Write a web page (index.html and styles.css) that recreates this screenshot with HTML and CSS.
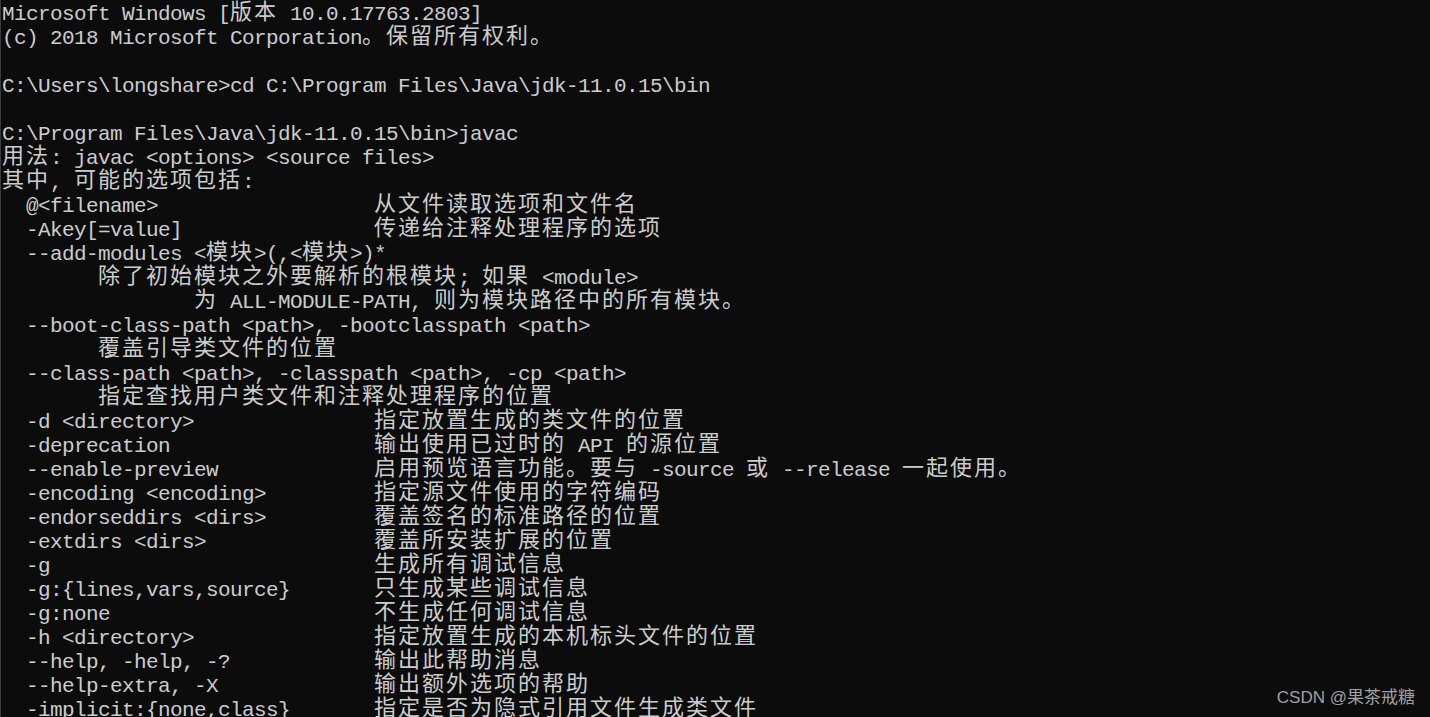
FILE: index.html
```html
<!DOCTYPE html>
<html lang="zh-CN">
<head>
<meta charset="utf-8">
<title>命令提示符</title>
<link rel="stylesheet" href="styles.css">
</head>
<body>
<main class="console">
  <div class="ln">Microsoft Windows [<span class="c">版本</span> 10.0.17763.2803]</div>
  <div class="ln">(c) 2018 Microsoft Corporation<span class="c">。保留所有权利。</span></div>
  <div class="ln"> </div>
  <div class="ln">C:\Users\longshare&gt;cd C:\Program Files\Java\jdk-11.0.15\bin</div>
  <div class="ln"> </div>
  <div class="ln">C:\Program Files\Java\jdk-11.0.15\bin&gt;javac</div>
  <div class="ln"><span class="c">用法</span>: javac &lt;options&gt; &lt;source files&gt;</div>
  <div class="ln"><span class="c">其中</span>, <span class="c">可能的选项包括</span>:</div>

  <div class="ln in2"><span class="k">@&lt;filename&gt;</span><span class="c">从文件读取选项和文件名</span></div>
  <div class="ln in2"><span class="k">-Akey[=value]</span><span class="c">传递给注释处理程序的选项</span></div>
  <div class="ln in2">--add-modules &lt;<span class="c">模块</span>&gt;(,&lt;<span class="c">模块</span>&gt;)*</div>
  <div class="ln in8"><span class="c">除了初始模块之外要解析的根模块</span>; <span class="c">如果</span> &lt;module&gt;</div>
  <div class="ln in16"><span class="c">为</span> ALL-MODULE-PATH, <span class="c">则为模块路径中的所有模块。</span></div>
  <div class="ln in2">--boot-class-path &lt;path&gt;, -bootclasspath &lt;path&gt;</div>
  <div class="ln in8"><span class="c">覆盖引导类文件的位置</span></div>
  <div class="ln in2">--class-path &lt;path&gt;, -classpath &lt;path&gt;, -cp &lt;path&gt;</div>
  <div class="ln in8"><span class="c">指定查找用户类文件和注释处理程序的位置</span></div>
  <div class="ln in2"><span class="k">-d &lt;directory&gt;</span><span class="c">指定放置生成的类文件的位置</span></div>
  <div class="ln in2"><span class="k">-deprecation</span><span class="c">输出使用已过时的</span> API <span class="c">的源位置</span></div>
  <div class="ln in2"><span class="k">--enable-preview</span><span class="c">启用预览语言功能。要与</span> -source <span class="c">或</span> --release <span class="c">一起使用。</span></div>
  <div class="ln in2"><span class="k">-encoding &lt;encoding&gt;</span><span class="c">指定源文件使用的字符编码</span></div>
  <div class="ln in2"><span class="k">-endorseddirs &lt;dirs&gt;</span><span class="c">覆盖签名的标准路径的位置</span></div>
  <div class="ln in2"><span class="k">-extdirs &lt;dirs&gt;</span><span class="c">覆盖所安装扩展的位置</span></div>
  <div class="ln in2"><span class="k">-g</span><span class="c">生成所有调试信息</span></div>
  <div class="ln in2"><span class="k">-g:{lines,vars,source}</span><span class="c">只生成某些调试信息</span></div>
  <div class="ln in2"><span class="k">-g:none</span><span class="c">不生成任何调试信息</span></div>
  <div class="ln in2"><span class="k">-h &lt;directory&gt;</span><span class="c">指定放置生成的本机标头文件的位置</span></div>
  <div class="ln in2"><span class="k">--help, -help, -?</span><span class="c">输出此帮助消息</span></div>
  <div class="ln in2"><span class="k">--help-extra, -X</span><span class="c">输出额外选项的帮助</span></div>
  <div class="ln in2"><span class="k">-implicit:{none,class}</span><span class="c">指定是否为隐式引用文件生成类文件</span></div>
</main>
<div class="mark">CSDN @果茶戒糖</div>
</body>
</html>
```

FILE: styles.css
```css
html, body {
  margin: 0;
  padding: 0;
  background: #0c0c0c;
  height: 100%;
  overflow: hidden;
}

.console {
  box-sizing: border-box;
  height: 717px;
  border-left: 1px solid #3c3c3c;
  padding: 3px 0 0 1px;
  color: #cccccc;
  font-family: "Liberation Mono", "Noto Sans CJK SC", monospace;
  font-size: 21px;
  letter-spacing: -0.6px;
  line-height: 24px;
  overflow: hidden;
}

.ln {
  height: 24px;
  white-space: pre;
}

.in2 { padding-left: 24px; }
.in8 { padding-left: 96px; }
.in16 { padding-left: 192px; }

.k {
  display: inline-block;
  width: 348px;
  vertical-align: top;
}

.c {
  font-family: "Noto Sans CJK SC", sans-serif;
  font-size: 22px;
  letter-spacing: 2px;
  line-height: 0;
  vertical-align: 1px;
}

.mark {
  position: absolute;
  right: 15px;
  bottom: 10px;
  color: #a0a0a0;
  font-family: "Liberation Sans", "Noto Sans CJK SC", sans-serif;
  font-size: 17px;
  line-height: 18px;
}
```
